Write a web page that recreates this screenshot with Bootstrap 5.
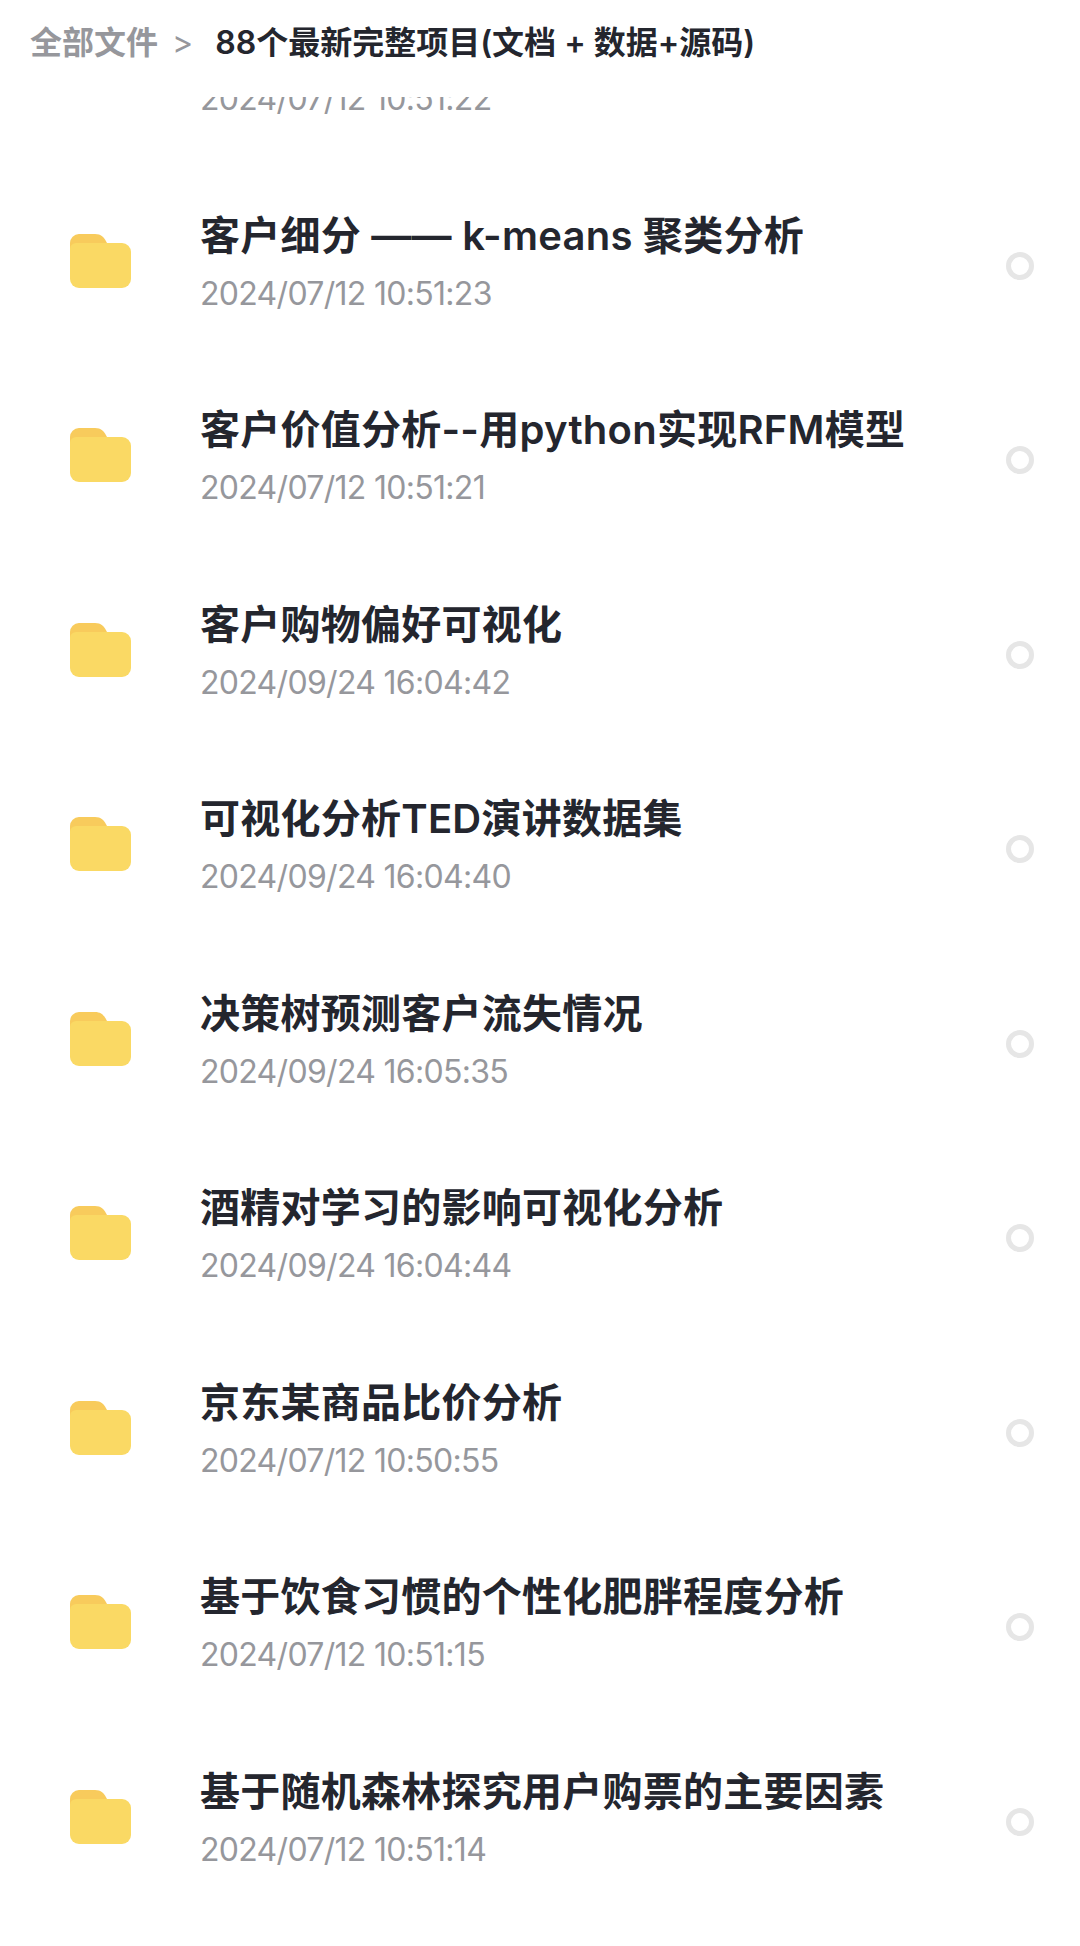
<!DOCTYPE html>
<html lang="zh">
<head>
  <meta charset="UTF-8">
  <meta name="viewport" content="width=device-width, initial-scale=1.0">
  <title>全部文件</title>
  <link href="https://cdn.jsdelivr.net/npm/bootstrap@5.3.0/dist/css/bootstrap.min.css" rel="stylesheet">
  <style>
    html, body { height: 100%; }
    body { background: #fff; overflow: hidden; font-family: "Inter", "Noto Sans CJK SC", sans-serif; }
    .crumb-bar { height: 97px; padding: 0 0 12px 30px; font-size: 32px; font-weight: 600; line-height: 1; background: #fff; white-space: nowrap; }
    .crumb-root { color: #96979c; }
    .crumb-sep { color: #96979c; margin: 0 22px 0 14px; font-weight: 400; }
    .crumb-now { color: #24262e; }
    .file-list { height: 1849px; overflow: hidden; }
    .file-scroll { margin-top: -134px; }
    .file-row { height: 194.5px; padding: 0 46px 0 70px; }
    .folder-icon { width: 61px; height: 54px; margin-right: 69px; margin-top: 12px; }
    .file-info { margin-top: 14px; }
    .file-name { color: #24262e; font-size: 40px; font-weight: 600; line-height: 52px; letter-spacing: .25px; white-space: nowrap; }
    .file-date { color: #96979c; font-size: 32px; letter-spacing: -.7px; line-height: 40px; margin-top: 12px; white-space: nowrap; font-family: "Inter", sans-serif; }
    .pick-ring { width: 28px; height: 28px; border: 5px solid #e6e6e6; border-radius: 50%; margin-top: 22px; }
  </style>
</head>
<body>
  <div class="crumb-bar d-flex align-items-center">
    <span class="crumb-root">全部文件</span>
    <span class="crumb-sep">&gt;</span>
    <span class="crumb-now">88个最新完整项目(文档 + 数据+源码)</span>
  </div>
  <div class="file-list">
    <div class="file-scroll" id="rows"></div>
  </div>
  <script>
    const files = [
      ['客户流失预测分析', '2024/07/12 10:51:22'],
      ['客户细分 —— k-means 聚类分析', '2024/07/12 10:51:23'],
      ['客户价值分析--用python实现RFM模型', '2024/07/12 10:51:21'],
      ['客户购物偏好可视化', '2024/09/24 16:04:42'],
      ['可视化分析TED演讲数据集', '2024/09/24 16:04:40'],
      ['决策树预测客户流失情况', '2024/09/24 16:05:35'],
      ['酒精对学习的影响可视化分析', '2024/09/24 16:04:44'],
      ['京东某商品比价分析', '2024/07/12 10:50:55'],
      ['基于饮食习惯的个性化肥胖程度分析', '2024/07/12 10:51:15'],
      ['基于随机森林探究用户购票的主要因素', '2024/07/12 10:51:14']
    ];
    const folder = '<svg class="folder-icon flex-shrink-0" viewBox="0 0 61 54"><path d="M0 9a9 9 0 0 1 9-9h16c6 0 9 3 12 9v8H0z" fill="#f8cb5c"/><path d="M0 15a6 6 0 0 1 6-6h46a9 9 0 0 1 9 9v27a9 9 0 0 1-9 9H9a9 9 0 0 1-9-9z" fill="#fad964"/></svg>';
    document.getElementById('rows').innerHTML = files.map(f => `
      <div class="file-row d-flex align-items-center">
        ${folder}
        <div class="file-info flex-grow-1">
          <div class="file-name">${f[0]}</div>
          <div class="file-date">${f[1]}</div>
        </div>
        <div class="pick-ring flex-shrink-0"></div>
      </div>`).join('');
  </script>
</body>
</html>
